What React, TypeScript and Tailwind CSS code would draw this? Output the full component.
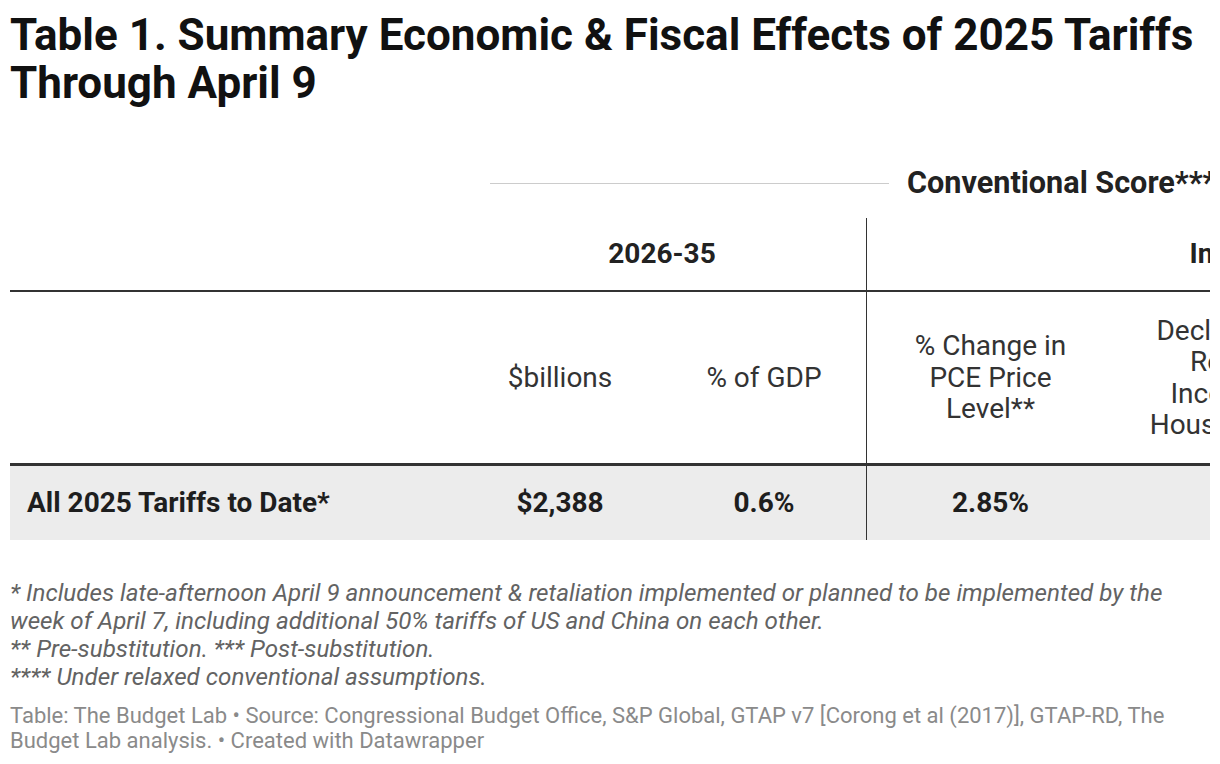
export default function App() {
  return (
    <div className="w-[1220px] h-[764px] overflow-hidden bg-white px-[10px] font-['Roboto',sans-serif] text-[#222]">
      {/* Title */}
      <h1 className="pt-[11px] text-[44px] leading-[48px] font-bold text-[#111]">
        Table 1. Summary Economic &amp; Fiscal Effects of 2025 Tariffs
        <br />
        Through April 9
      </h1>

      {/* Table */}
      <div className="mt-[53px] w-[1200px] overflow-hidden">
        <div className="w-[1600px]">
          {/* Spanning header */}
          <div className="flex h-[58px] items-start pt-[7px]">
            <div className="flex h-[32px] items-center">
              <div className="w-[480px]" />
              <div className="h-px w-[399px] bg-[#cccccc]" />
              <div className="ml-[18px] whitespace-nowrap text-[30.6px] leading-[32px] font-bold">
                Conventional Score***
              </div>
            </div>
          </div>

          {/* Period header */}
          <div className="flex h-[74px] border-b-2 border-[#333]">
            <div className="w-[448px]" />
            <div className="flex w-[408px] items-center justify-center text-[28px] font-bold">
              2026-35
            </div>
            <div className="flex border-l border-[#333]">
              <div className="w-[248px]" />
              <div className="flex w-[244px] items-center justify-center whitespace-nowrap text-[28px] font-bold">
                In 2025
              </div>
            </div>
          </div>

          {/* Column header */}
          <div className="flex h-[174px] border-b-[3px] border-[#333] text-[28px] leading-[31.5px] text-[#333]">
            <div className="w-[448px]" />
            <div className="flex w-[204px] items-center justify-center">$billions</div>
            <div className="flex w-[204px] items-center justify-center">% of GDP</div>
            <div className="flex w-[248px] items-center justify-center border-l border-[#333] text-center">
              % Change in
              <br />
              PCE Price
              <br />
              Level**
            </div>
            <div className="flex w-[206px] items-center justify-center text-center">
              Decline in
              <br />
              Real
              <br />
              Income
              <br />
              Household
            </div>
          </div>

          {/* Data row */}
          <div className="flex h-[74px] bg-[#ececec] text-[28px] font-bold text-[#1e1e1e]">
            <div className="flex w-[448px] items-center pl-[17px]">All 2025 Tariffs to Date*</div>
            <div className="flex w-[204px] items-center justify-center">$2,388</div>
            <div className="flex w-[204px] items-center justify-center">0.6%</div>
            <div className="flex w-[248px] items-center justify-center border-l border-[#333]">2.85%</div>
            <div className="w-[206px]" />
          </div>
        </div>
      </div>

      {/* Notes */}
      <div className="mt-[39px] whitespace-nowrap text-[24.2px] leading-[28px] italic text-[#636363]">
        * Includes late-afternoon April 9 announcement &amp; retaliation implemented or planned to be implemented by the
        <br />
        week of April 7, including additional 50% tariffs of US and China on each other.
        <br />
        ** Pre-substitution. *** Post-substitution.
        <br />
        **** Under relaxed conventional assumptions.
      </div>

      <div className="mt-[12px] whitespace-nowrap text-[22px] leading-[25px] text-[#8a8a8a]">
        Table: The Budget Lab • Source: Congressional Budget Office, S&amp;P Global, GTAP v7 [Corong et al (2017)], GTAP-RD, The
        <br />
        Budget Lab analysis. • Created with Datawrapper
      </div>
    </div>
  );
}
